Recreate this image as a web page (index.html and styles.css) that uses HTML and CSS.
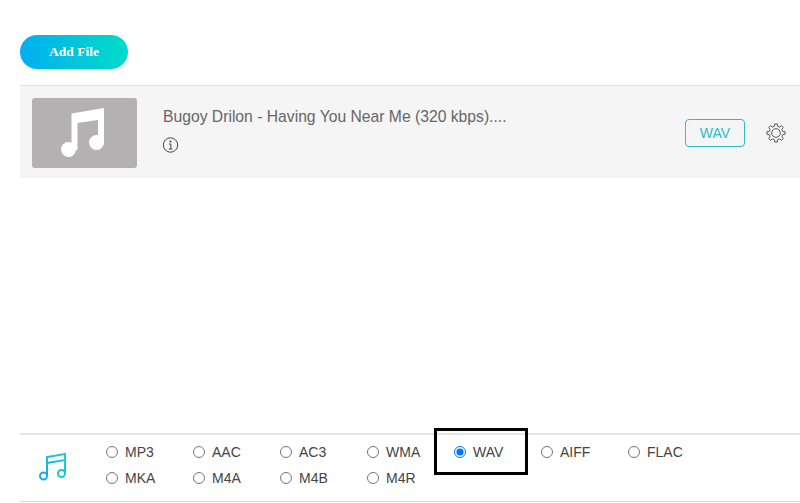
FILE: index.html
```html
<!DOCTYPE html>
<html lang="en">
<head>
  <meta charset="UTF-8">
  <title>Add File</title>
  <link rel="stylesheet" href="styles.css">
</head>
<body>
  <div class="page">
    <a class="add-file" href="#">Add File</a>

    <div class="file-row">
      <div class="thumb">
        <svg width="50" height="62" viewBox="0 0 50 62">
          <path d="M11.500 11.500 L44 6 V41 H38 V18 L17.500 21 V48 H11.500 Z" fill="#fff"/>
          <circle cx="8.500" cy="47.500" r="7.500" fill="#fff"/>
          <circle cx="36.500" cy="40.500" r="7.500" fill="#fff"/>
        </svg>
      </div>
      <div class="file-info">
        <div class="file-name">Bugoy Drilon - Having You Near Me (320 kbps)....</div>
        <svg class="info-icon" width="16" height="16" viewBox="0 0 16 16">
          <circle cx="7.500" cy="8" r="7.200" fill="none" stroke="#444" stroke-width="1"/>
          <path d="M6 7 H7.800 V12 M5.800 12 H9.500" fill="none" stroke="#444" stroke-width="1"/>
          <circle cx="7.500" cy="4.600" r="1" fill="#444"/>
        </svg>
      </div>
      <div class="format-tag">WAV</div>
      <svg class="gear" width="20" height="20" viewBox="0 0 24 24">
        <circle cx="12" cy="12" r="5.200" fill="none" stroke="#555" stroke-width="1.200"/>
        <path d="M10.130 3.910 L10.470 1.110 H13.530 L13.870 3.910 L16.400 4.960 L18.620 3.220 L20.780 5.380 L19.040 7.600 L20.090 10.130 L22.890 10.470 V13.530 L20.090 13.870 L19.040 16.400 L20.780 18.620 L18.620 20.780 L16.400 19.040 L13.870 20.090 L13.530 22.890 H10.470 L10.130 20.090 L7.600 19.040 L5.380 20.780 L3.220 18.620 L4.960 16.400 L3.910 13.870 L1.110 13.530 V10.470 L3.910 10.130 L4.960 7.600 L3.220 5.380 L5.380 3.220 L7.600 4.960 Z" fill="none" stroke="#555" stroke-width="1.200" stroke-linejoin="round"/>
      </svg>
    </div>

    <div class="spacer"></div>

    <div class="format-panel">
      <svg class="panel-icon" width="28" height="30" viewBox="0 0 28 30">
        <defs>
          <linearGradient id="note" x1="0" y1="1" x2="1" y2="0">
            <stop offset="0" stop-color="#12aee8"/>
            <stop offset="1" stop-color="#1ed3c6"/>
          </linearGradient>
        </defs>
        <path d="M8 24 V5 L26 2 V21 M8 11 L26 8" fill="none" stroke="url(#note)" stroke-width="2"/>
        <circle cx="4.500" cy="24" r="3.500" fill="none" stroke="#12aee8" stroke-width="2"/>
        <circle cx="22.500" cy="21.500" r="3.500" fill="none" stroke="#1cc5d0" stroke-width="2"/>
      </svg>
      <div class="format-grid">
        <label class="format"><input type="radio" name="fmt">MP3</label>
        <label class="format"><input type="radio" name="fmt">AAC</label>
        <label class="format"><input type="radio" name="fmt">AC3</label>
        <label class="format"><input type="radio" name="fmt">WMA</label>
        <label class="format"><input type="radio" name="fmt" checked>WAV</label>
        <label class="format"><input type="radio" name="fmt">AIFF</label>
        <label class="format"><input type="radio" name="fmt">FLAC</label>
        <label class="format"><input type="radio" name="fmt">MKA</label>
        <label class="format"><input type="radio" name="fmt">M4A</label>
        <label class="format"><input type="radio" name="fmt">M4B</label>
        <label class="format"><input type="radio" name="fmt">M4R</label>
      </div>
      <div class="highlight"></div>
    </div>
  </div>
</body>
</html>
```

FILE: styles.css
```css
html, body {
  margin: 0;
  padding: 0;
  background-color: #fff;
}

body {
  font-family: "Liberation Sans", Arial, sans-serif;
  color: #555;
  overflow: hidden;
}

.page {
  width: 780px;
  height: 503px;
  margin-left: 20px;
  display: flex;
  flex-direction: column;
  align-items: stretch;
}

/* Add file button */
.add-file {
  display: block;
  width: 108px;
  height: 34px;
  line-height: 33px;
  margin-top: 35px;
  margin-bottom: 16px;
  border-radius: 17px;
  background: linear-gradient(90deg, #02aef2, #02dcc8);
  color: #fff;
  font-family: "Liberation Serif", "Times New Roman", serif;
  font-size: 13.500px;
  font-weight: bold;
  text-align: center;
  text-decoration: none;
}

/* File row */
.file-row {
  display: flex;
  align-items: flex-start;
  height: 92px;
  border-top: 1px solid #e0e0e0;
  background-color: #f5f5f5;
}

.thumb {
  display: flex;
  align-items: center;
  justify-content: center;
  width: 105px;
  height: 70px;
  margin: 12px 0 0 12px;
  border-radius: 3px;
  background-color: #b3b1b2;
}

.file-info {
  flex: 1;
  margin-left: 26px;
  padding-top: 22px;
}

.file-name {
  font-size: 15.700px;
  line-height: 17px;
  color: #666;
}

.info-icon {
  display: block;
  margin-top: 12px;
}

.format-tag {
  width: 58px;
  height: 26px;
  line-height: 26px;
  margin-top: 33px;
  border: 1px solid #2cbccb;
  border-radius: 4px;
  color: #2cbccb;
  font-size: 14px;
  text-align: center;
}

.gear {
  margin: 37px 14px 0 21px;
}

.spacer {
  flex: 1;
}

/* Format picker */
.format-panel {
  position: relative;
  display: flex;
  height: 66px;
  margin-bottom: 1px;
  border-top: 2px solid #e4e4e4;
  border-bottom: 1px solid #d8d8d8;
}

.panel-icon {
  margin: 17px 0 0 19px;
}

.format-grid {
  display: grid;
  grid-template-columns: repeat(7, 87px);
  grid-auto-rows: 26px;
  margin: 4px 0 0 39px;
}

.format {
  display: flex;
  align-items: center;
  font-size: 14px;
  color: #444;
}

.format input {
  width: 12px;
  height: 12px;
  margin: 0 7px 0 0;
}

.highlight {
  position: absolute;
  left: 414px;
  top: -7px;
  width: 88px;
  height: 41px;
  border: 3px solid #000;
}
```
